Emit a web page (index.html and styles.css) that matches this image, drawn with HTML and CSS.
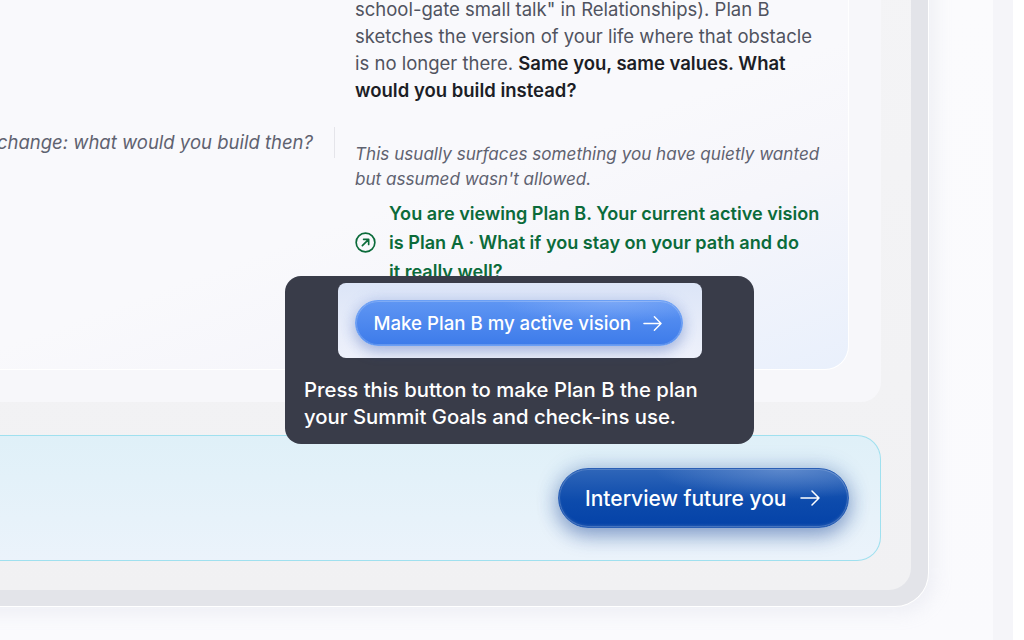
FILE: index.html
```html
<!DOCTYPE html>
<html>
<head>
	<title>Plan B</title>
	<link rel="stylesheet" href="styles.css">
</head>
<body>

	<div class="page">
		<div class="shell">
			<div class="panel">
				<div class="planCard">
					<div class="planInner">
						<div class="row">
							<div></div>
							<p class="intro">school-gate small talk" in Relationships). Plan B<br>sketches the version of your life where that obstacle<br>is no longer there. <b>Same you, same values. What<br>would you build instead?</b></p>
						</div>
						<div class="row rowPrompt">
							<p class="question">change: what would you build then?</p>
							<div class="answer">
								<p class="note">This usually surfaces something you have quietly wanted<br>but assumed wasn't allowed.</p>
								<div class="viewing">
									<svg class="viewIcon" viewBox="0 0 20 20" fill="none" stroke="currentColor" stroke-width="1.6" stroke-linecap="round" stroke-linejoin="round">
										<circle cx="10" cy="10" r="8.9"/>
										<path d="M7 13l6-6M8.2 7H13v4.8"/>
									</svg>
									<p>You are viewing Plan B. Your current active vision<br>is Plan A · What if you stay on your path and do<br>it really well?</p>
								</div>
							</div>
						</div>
					</div>
				</div>
				<div class="interview">
					<a href="#" class="btn btnDark">
						Interview future you
						<svg class="arrow" viewBox="0 0 20 20" fill="none" stroke="currentColor" stroke-width="1.5" stroke-linecap="round" stroke-linejoin="round"><path d="M1 10h18M12 3l7 7-7 7"/></svg>
					</a>
				</div>
			</div>
		</div>
		<div class="scrollEdge"></div>
		<div class="tip">
			<div class="spot">
				<a href="#" class="btn btnBlue">
					Make Plan B my active vision
					<svg class="arrow" viewBox="0 0 20 20" fill="none" stroke="currentColor" stroke-width="1.5" stroke-linecap="round" stroke-linejoin="round"><path d="M1 10h18M12 3l7 7-7 7"/></svg>
				</a>
			</div>
			<p class="tipText">Press this button to make Plan B the plan<br>your Summit Goals and check-ins use.</p>
		</div>
	</div>

</body>
</html>
```

FILE: styles.css
```css
html, body{
	margin: 0;
	height: 640px;
	overflow: hidden;
	background: #fff;
	font-family: "Inter", "Liberation Sans", sans-serif;
}

p{
	margin: 0;
}

a{
	text-decoration: none;
}

.page{
	position: relative;
	display: flex;
	width: 1013px;
	height: 640px;
	overflow: hidden;
	background: linear-gradient(180deg, #fbfbfd, #fafafd);
}

.shell{
	box-sizing: border-box;
	flex: none;
	width: 971px;
	height: 649px;
	margin: -42px 0 0 -42px;
	padding: 0 17px 16px 0;
	background: #e3e4e9;
	border-right: 1px solid #fff;
	border-bottom: 1px solid #fff;
	border-radius: 0 0 34px 0;
	box-shadow: 6px 6px 18px rgba(190, 192, 210, .18);
}

.panel{
	box-sizing: border-box;
	display: flex;
	flex-direction: column;
	gap: 33px;
	height: 100%;
	padding: 0 30px 29px 0;
	background: linear-gradient(180deg, #f4f4f6, #f1f1f3);
	border-radius: 0 0 22px 0;
}

.planCard{
	flex: 1;
	display: flex;
	padding: 0 32px 32px 0;
	background: #f7f7fa;
	border-radius: 0 0 20px 0;
}

.planInner{
	box-sizing: border-box;
	flex: 1;
	padding-top: 38px;
	overflow: hidden;
	background: linear-gradient(160deg, #f9f9fc 55%, #f6f6fb 72%, #e9f0fc 100%);
	border-right: 1px solid #fff;
	border-bottom: 1px solid #fff;
	border-radius: 0 0 24px 0;
}

.row{
	display: grid;
	grid-template-columns: 377px 1fr;
}

.intro{
	padding-left: 20px;
	font-size: 18.5px;
	line-height: 27px;
	color: #50535f;
	white-space: nowrap;
}

.intro b{
	font-weight: 600;
	color: #1c1e26;
}

.rowPrompt{
	margin-top: 23px;
}

.question{
	height: 31px;
	padding-right: 21px;
	border-right: 1px solid #e5e5ea;
	font-size: 18.5px;
	font-style: italic;
	line-height: 31px;
	color: #5f6270;
	text-align: right;
	white-space: nowrap;
}

.answer{
	padding: 14px 0 0 20px;
}

.note{
	font-size: 17.1px;
	font-style: italic;
	line-height: 25px;
	color: #5f6270;
	white-space: nowrap;
}

.viewing{
	display: flex;
	align-items: center;
	gap: 13px;
	margin-top: 8px;
	font-size: 18.1px;
	font-weight: 600;
	line-height: 29px;
	color: #0b6b3a;
	white-space: nowrap;
}

.viewIcon{
	flex: none;
	width: 21px;
	height: 21px;
}

.interview{
	box-sizing: border-box;
	flex: none;
	display: flex;
	align-items: center;
	justify-content: flex-end;
	height: 126px;
	padding-right: 31px;
	background: linear-gradient(180deg, #dff0f8, #ebf3fb);
	border: 1px solid #9fe0ef;
	border-left: 0;
	border-radius: 0 24px 24px 0;
}

.btn{
	box-sizing: border-box;
	display: flex;
	align-items: center;
	justify-content: space-between;
	color: #fff;
	border-radius: 999px;
	white-space: nowrap;
}

.btnDark{
	width: 291px;
	height: 60px;
	padding: 0 28px 0 26px;
	font-size: 21px;
	font-weight: 500;
	background: radial-gradient(ellipse 130px 30px at 78% 0, rgba(130, 165, 220, .55), transparent), linear-gradient(180deg, #2f66b9 0%, #0d4bac 55%, #0442a8 100%);
	border: 1px solid #2a5fb5;
	box-shadow: inset 0 0 0 1px rgba(255, 255, 255, .18), inset 0 -2px 3px rgba(255, 255, 255, .12), 0 8px 20px rgba(30, 70, 150, .4), 0 0 22px rgba(40, 90, 170, .28);
}

.btnDark .arrow{
	width: 20px;
	height: 20px;
}

.tip{
	position: absolute;
	left: 285px;
	top: 276px;
	box-sizing: border-box;
	width: 469px;
	height: 168px;
	padding-top: 7px;
	background: #393c49;
	border-radius: 16px;
}

.spot{
	box-sizing: border-box;
	width: 364px;
	height: 75px;
	margin: 0 auto;
	padding: 17px 0 0 17px;
	background: linear-gradient(180deg, #dce5f7, #eef1fb);
	border-radius: 8px;
}

.btnBlue{
	width: 328px;
	height: 46px;
	padding: 0 20px 0 18px;
	font-size: 18.65px;
	font-weight: 500;
	background: radial-gradient(ellipse 110px 22px at 78% 0, rgba(150, 185, 250, .5), transparent), linear-gradient(180deg, #5f96f3, #3d7bea);
	border: 1px solid #6a9ff5;
	box-shadow: inset 0 0 0 1px rgba(255, 255, 255, .2), 0 6px 14px rgba(60, 90, 170, .32), 0 0 16px rgba(90, 130, 220, .2);
}

.btnBlue .arrow{
	width: 19px;
	height: 19px;
}

.tipText{
	padding: 18px 0 0 19px;
	font-size: 20.3px;
	font-weight: 500;
	line-height: 27px;
	color: #fff;
	white-space: nowrap;
}

.scrollEdge{
	flex: none;
	width: 20px;
	height: 640px;
	margin-left: auto;
	background: #f5f5f9;
}
```
